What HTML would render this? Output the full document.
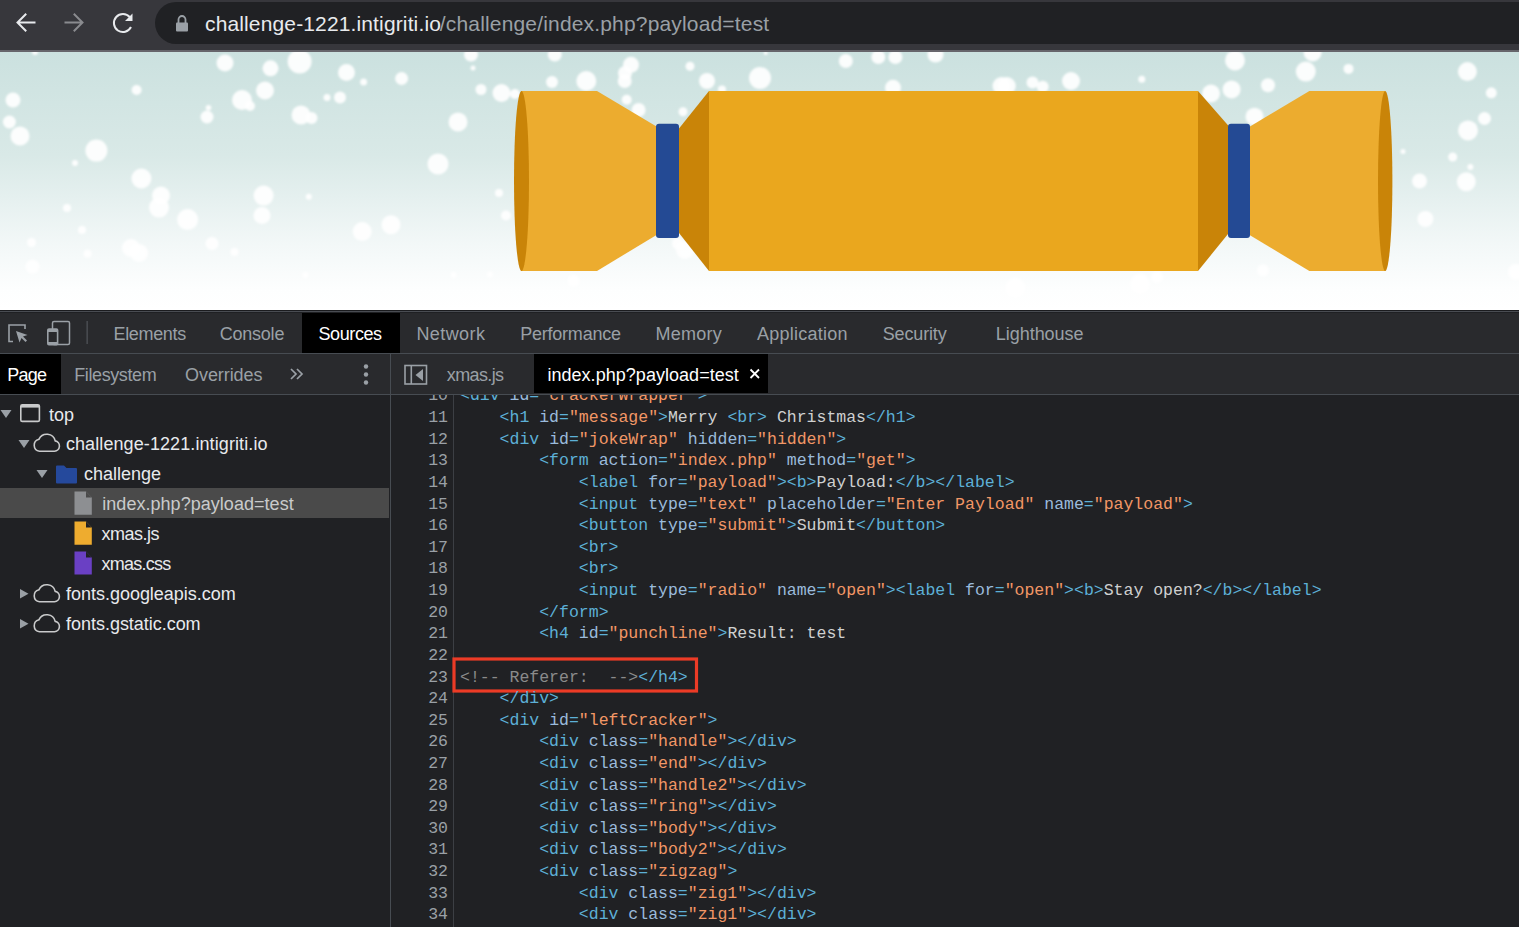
<!DOCTYPE html>
<html><head><meta charset="utf-8">
<style>
html,body{margin:0;padding:0;}
body{width:1519px;height:927px;overflow:hidden;position:relative;background:#202124;font-family:"Liberation Sans",sans-serif;}
.a{position:absolute;}
.t{position:absolute;white-space:pre;line-height:normal;}
.c{position:absolute;left:460px;white-space:pre;font-family:"Liberation Mono",monospace;font-size:16.500px;line-height:normal;}
.ln{position:absolute;left:400px;width:48px;text-align:right;white-space:pre;font-family:"Liberation Mono",monospace;font-size:16.500px;line-height:normal;color:#9aa0a6;}
</style></head><body>
<!-- browser toolbar -->
<div class="a" style="left:0;top:0;width:1519px;height:50px;background:#37373c"></div>
<div class="a" style="left:0;top:50px;width:1519px;height:2px;background:#66656b"></div>
<div class="a" style="left:155px;top:2px;width:1500px;height:42px;border-radius:21px;background:#202124"></div>
<svg class="a" style="left:0;top:0" width="200" height="50" viewBox="0 0 200 50">
 <g fill="none" stroke-width="2" stroke-linecap="square">
  <path d="M34.5 22.5H18.5M25.5 14.5L17.5 22.5L25.5 30.5" stroke="#e8eaed"/>
  <path d="M65.5 22.5H81.5M74.5 14.5L82.5 22.5L74.5 30.5" stroke="#8a8b8f"/>
  <path d="M129.8 17.2A9 9 0 1 0 131 27" stroke="#e8eaed" stroke-linecap="butt"/>
 </g>
 <path d="M132.5 13.5V21H125Z" fill="#e8eaed"/>
 <!-- lock -->
 <rect x="176" y="22.5" width="12" height="9" rx="1" fill="#9aa0a6"/>
 <path d="M178.5 23V19.5A3.5 3.5 0 0 1 185.5 19.5V23" fill="none" stroke="#9aa0a6" stroke-width="1.8"/>
</svg>
<!-- page -->
<div class="a" style="left:0;top:52px;width:1519px;height:258px;background:linear-gradient(#cbe1df 0%,#d9e9e7 40%,#f3f8f8 75%,#fdfefe 92%,#ffffff 100%);overflow:hidden">
<svg width="1519" height="258" viewBox="0 52 1519 258" style="display:block">
 <defs><filter id="bl" x="-50%" y="-50%" width="200%" height="200%"><feGaussianBlur stdDeviation="0.8"/></filter></defs>
 <g fill="#ffffff" fill-opacity="0.92" filter="url(#bl)"><circle cx='225' cy='63' r='8.5'/><circle cx='270.5' cy='68.3' r='8'/><circle cx='299.6' cy='61.4' r='12'/><circle cx='346.5' cy='72.4' r='8.5'/><circle cx='363.6' cy='82' r='3.5'/><circle cx='401.6' cy='78.5' r='6.5'/><circle cx='471' cy='54.6' r='7'/><circle cx='473' cy='68' r='2.5'/><circle cx='481' cy='89.5' r='5.5'/><circle cx='501.5' cy='93' r='9'/><circle cx='515' cy='94' r='5'/><circle cx='136.6' cy='90' r='5'/><circle cx='13' cy='100' r='7.5'/><circle cx='9.4' cy='122' r='6.5'/><circle cx='20' cy='136' r='9.5'/><circle cx='96.4' cy='150.6' r='11'/><circle cx='75' cy='163' r='3'/><circle cx='141.4' cy='178.5' r='10'/><circle cx='161' cy='195.6' r='9'/><circle cx='159' cy='207.6' r='10'/><circle cx='187.6' cy='219.6' r='10.5'/><circle cx='67' cy='208' r='4'/><circle cx='82' cy='230' r='4'/><circle cx='31.5' cy='242.5' r='4.5'/><circle cx='87.6' cy='253.8' r='4'/><circle cx='32.5' cy='266.8' r='7'/><circle cx='131' cy='248' r='9'/><circle cx='139' cy='253' r='9'/><circle cx='212' cy='243.5' r='6.5'/><circle cx='234.5' cy='252' r='4'/><circle cx='242' cy='100' r='10'/><circle cx='250' cy='106' r='5'/><circle cx='265' cy='90.5' r='9'/><circle cx='208.5' cy='107.7' r='2.8'/><circle cx='207' cy='117' r='6.5'/><circle cx='301' cy='115' r='9.5'/><circle cx='311.5' cy='118' r='6'/><circle cx='327' cy='97.4' r='3.5'/><circle cx='340' cy='97.4' r='6'/><circle cx='458' cy='122' r='9.5'/><circle cx='438' cy='164' r='10.5'/><circle cx='263.6' cy='195.6' r='10'/><circle cx='262' cy='215.5' r='8.5'/><circle cx='308.8' cy='196.7' r='3'/><circle cx='362.2' cy='231.6' r='9.5'/><circle cx='391' cy='224.7' r='9.5'/><circle cx='499' cy='193' r='4'/><circle cx='506' cy='215.5' r='5'/><circle cx='35' cy='52' r='3'/><circle cx='554.8' cy='54.6' r='7'/><circle cx='631' cy='64.8' r='8'/><circle cx='625' cy='73' r='7'/><circle cx='624.7' cy='81' r='7'/><circle cx='690' cy='66.2' r='4.5'/><circle cx='586.3' cy='81' r='10'/><circle cx='552' cy='82' r='6'/><circle cx='707' cy='81' r='8'/><circle cx='760' cy='78' r='11'/><circle cx='845.8' cy='61' r='7'/><circle cx='878.3' cy='57' r='7'/><circle cx='895.4' cy='57' r='7'/><circle cx='935.5' cy='54.6' r='8'/><circle cx='765.7' cy='53' r='2'/><circle cx='893' cy='87.8' r='8'/><circle cx='1001.5' cy='86' r='9'/><circle cx='722' cy='89.5' r='4'/><circle cx='626.7' cy='99.8' r='5'/><circle cx='638.6' cy='110' r='7'/><circle cx='683' cy='111.8' r='4.5'/><circle cx='685' cy='250' r='9'/><circle cx='678' cy='243.5' r='6'/><circle cx='1235' cy='60.4' r='10'/><circle cx='1312.6' cy='52.5' r='9'/><circle cx='1305.8' cy='71.6' r='10'/><circle cx='1348.5' cy='68.9' r='5'/><circle cx='1467.4' cy='71.6' r='9.5'/><circle cx='1071' cy='81' r='9'/><circle cx='1032.5' cy='82.6' r='6'/><circle cx='1042.7' cy='86.7' r='6'/><circle cx='1006.8' cy='86' r='9'/><circle cx='1141.8' cy='79.2' r='3.5'/><circle cx='1231.6' cy='89.4' r='9'/><circle cx='1211' cy='93.5' r='9'/><circle cx='1268' cy='85.3' r='7'/><circle cx='1254.5' cy='116.7' r='9'/><circle cx='1491.3' cy='92.8' r='5.5'/><circle cx='1484.5' cy='118.5' r='6.5'/><circle cx='1468' cy='130.4' r='10'/><circle cx='1403' cy='151.6' r='2.5'/><circle cx='1452.7' cy='157' r='4.5'/><circle cx='1470.4' cy='167' r='3'/><circle cx='1419.5' cy='181' r='7.5'/><circle cx='1466.3' cy='181.7' r='9.5'/><circle cx='1425.4' cy='219' r='8'/><circle cx='1015.4' cy='288' r='10'/><circle cx='1140' cy='284' r='10'/><circle cx='1157' cy='277.3' r='6'/><circle cx='1263' cy='270.5' r='6'/><circle cx='1516' cy='272' r='8'/><circle cx='573.6' cy='281' r='6'/><circle cx='305.4' cy='275' r='3'/><circle cx='453.6' cy='275' r='3'/><circle cx='490' cy='274.4' r='3'/></g>
 <polygon points="521,91 597,91 656.5,126.4 656.5,234.9 597,271 521,271" fill="#ecac2f"/>
 <ellipse cx="521.5" cy="181" rx="7.5" ry="90" fill="#c98408"/>
 <polygon points="679,128.5 709,91 709,271 679,233" fill="#c98408"/>
 <rect x="709" y="91" width="489" height="180" fill="#eaa71e"/>
 <polygon points="1198,91 1228,125.3 1228,234 1198,271" fill="#c98408"/>
 <polygon points="1250,126.4 1309.4,91 1385,91 1385,271 1309.4,271 1250,235.3" fill="#ecac2f"/>
 <ellipse cx="1385.2" cy="181" rx="7.2" ry="90" fill="#c98408"/>
 <rect x="656" y="123.8" width="23" height="114.2" rx="3" fill="#244a94"/>
 <rect x="1228" y="123.8" width="22" height="114.2" rx="3" fill="#244a94"/>
</svg>
</div>
<!-- devtools chrome -->
<div class="a" style="left:0;top:310px;width:1519px;height:1px;background:#1b1c1f"></div>
<div class="a" style="left:0;top:311px;width:1519px;height:1px;background:#494c52"></div>
<div class="a" style="left:0;top:312px;width:1519px;height:1px;background:#1f2023"></div>
<div class="a" style="left:0;top:313px;width:1519px;height:40px;background:#292a2d"></div>
<div class="a" style="left:0;top:353px;width:1519px;height:1px;background:#474c52"></div>
<div class="a" style="left:0;top:354px;width:1519px;height:40px;background:#292a2d"></div>
<div class="a" style="left:0;top:394px;width:1519px;height:1px;background:#474c52"></div>
<div class="a" style="left:302px;top:313px;width:98px;height:40px;background:#000"></div>
<div class="a" style="left:0;top:354px;width:61px;height:40px;background:#000"></div>
<div class="a" style="left:534px;top:354px;width:234px;height:39px;background:#000"></div>
<div class="a" style="left:390px;top:353px;width:1px;height:574px;background:#474c52"></div>
<div class="a" style="left:0;top:488px;width:389px;height:30px;background:#4a4a4a"></div>
<div class="a" style="left:453px;top:395px;width:1px;height:532px;background:#3c3f44"></div>
<!-- devtools icons -->
<svg class="a" style="left:0;top:310px" width="1519" height="617" viewBox="0 310 1519 617">
 <!-- inspect -->
 <path d="M13 341.5H9V325H25V329" fill="none" stroke="#9aa0a6" stroke-width="1.6"/>
 <path d="M16 331L27.5 335L23 336.5L27 340.5L25.5 342L21.5 338L19.5 342.5Z" fill="#9aa0a6"/>
 <!-- device -->
 <rect x="52.5" y="321.5" width="17" height="23" rx="1.5" fill="none" stroke="#9aa0a6" stroke-width="1.5"/>
 <rect x="47.8" y="329" width="9.8" height="15.6" rx="1.2" fill="#292a2d" stroke="#9aa0a6" stroke-width="1.6"/>
 <rect x="47.8" y="329" width="9.8" height="3" fill="#9aa0a6"/>
 <rect x="47.8" y="342" width="9.8" height="2.6" fill="#9aa0a6"/>
 <rect x="86.5" y="321" width="1.3" height="23" fill="#4f5258"/>
 <!-- chevrons -->
 <path d="M291 369L296 374L291 379M297 369L302 374L297 379" fill="none" stroke="#9aa0a6" stroke-width="1.7"/>
 <circle cx="366" cy="366.5" r="2.2" fill="#9aa0a6"/><circle cx="366" cy="374.5" r="2.2" fill="#9aa0a6"/><circle cx="366" cy="382.5" r="2.2" fill="#9aa0a6"/>
 <!-- sidebar toggle -->
 <rect x="405" y="365.5" width="21.5" height="18.5" fill="none" stroke="#9aa0a6" stroke-width="1.6"/>
 <rect x="410.5" y="365.5" width="1.6" height="18.5" fill="#9aa0a6"/>
 <path d="M423 369V381L415.5 375Z" fill="#9aa0a6"/>
 <!-- close x -->
 <path d="M750.5 369.5L759 378M759 369.5L750.5 378" stroke="#ffffff" stroke-width="1.8"/>
 <!-- tree triangles -->
 <path d="M0.5 410H11.5L6 418Z" fill="#9aa0a6"/>
 <path d="M18.5 440H29.5L24 448Z" fill="#9aa0a6"/>
 <path d="M36.5 470H47.5L42 478Z" fill="#9aa0a6"/>
 <path d="M20 589V598.5L28.5 593.75Z" fill="#9aa0a6"/>
 <path d="M20 619V628.5L28.5 623.75Z" fill="#9aa0a6"/>
 <!-- window icon -->
 <rect x="20.8" y="404.8" width="18.6" height="16.6" rx="1.5" fill="none" stroke="#c9cacb" stroke-width="1.6"/>
 <rect x="21" y="405" width="18.5" height="2.6" fill="#c9cacb"/>
 <!-- clouds -->
 <g fill="none" stroke="#c9cacb" stroke-width="1.6">
  <path d="M39.5 451.2H54.5A5.2 5.2 0 0 0 55.2 440.9A8.6 8.6 0 0 0 39 439.2A6.1 6.1 0 0 0 39.5 451.2Z"/>
  <path d="M39.5 601.7H54.5A5.2 5.2 0 0 0 55.2 591.4A8.6 8.6 0 0 0 39 589.7A6.1 6.1 0 0 0 39.5 601.7Z"/>
  <path d="M39.5 631.7H54.5A5.2 5.2 0 0 0 55.2 621.4A8.6 8.6 0 0 0 39 619.7A6.1 6.1 0 0 0 39.5 631.7Z"/>
 </g>
 <!-- folder -->
 <path d="M56 466.5Q56 465.5 57 465.5H64L66.5 468H76Q77 468 77 469V482.5Q77 483.5 76 483.5H57Q56 483.5 56 482.5Z" fill="#25499c"/>
 <!-- file icons -->
 <path d="M74.5 491.5H86L91.8 497.5V514.8H74.5Z" fill="#8d8f92"/>
 <path d="M86 491.5V497.5H91.8Z" fill="#4a4a4a"/>
 <path d="M74.5 521.5H86L91.8 527.5V544.8H74.5Z" fill="#eeac2f"/>
 <path d="M86 521.5V527.5H91.8Z" fill="#202124"/>
 <path d="M74.5 551.5H86L91.8 557.5V574.6H74.5Z" fill="#6a40c4"/>
 <path d="M86 551.5V557.5H91.8Z" fill="#202124"/>
 <!-- red box -->
 <rect x="454" y="659" width="242.5" height="32" fill="none" stroke="#ec3b26" stroke-width="3.2"/>
</svg>
<div class='t' style="left:205.00px;top:12.00px;font-size:21px;color:#e8eaed;letter-spacing:0.137px;font-family:'Liberation Sans'">challenge-1221.intigriti.io</div>
<div class='t' style="left:439.80px;top:12.00px;font-size:21px;color:#9aa0a6;letter-spacing:0.167px;font-family:'Liberation Sans'">/challenge/index.php?payload=test</div>
<div class='t' style="left:113.50px;top:323.71px;font-size:18px;color:#9aa0a6;letter-spacing:-0.342px;font-family:'Liberation Sans'">Elements</div>
<div class='t' style="left:219.70px;top:323.71px;font-size:18px;color:#9aa0a6;letter-spacing:-0.220px;font-family:'Liberation Sans'">Console</div>
<div class='t' style="left:318.50px;top:323.71px;font-size:18px;color:#ffffff;letter-spacing:-0.405px;font-family:'Liberation Sans'">Sources</div>
<div class='t' style="left:416.40px;top:323.71px;font-size:18px;color:#9aa0a6;letter-spacing:0.412px;font-family:'Liberation Sans'">Network</div>
<div class='t' style="left:520.30px;top:323.71px;font-size:18px;color:#9aa0a6;letter-spacing:-0.240px;font-family:'Liberation Sans'">Performance</div>
<div class='t' style="left:655.40px;top:323.71px;font-size:18px;color:#9aa0a6;letter-spacing:0.282px;font-family:'Liberation Sans'">Memory</div>
<div class='t' style="left:756.90px;top:323.71px;font-size:18px;color:#9aa0a6;letter-spacing:0.249px;font-family:'Liberation Sans'">Application</div>
<div class='t' style="left:882.70px;top:323.71px;font-size:18px;color:#9aa0a6;letter-spacing:-0.140px;font-family:'Liberation Sans'">Security</div>
<div class='t' style="left:995.70px;top:323.71px;font-size:18px;color:#9aa0a6;letter-spacing:-0.018px;font-family:'Liberation Sans'">Lighthouse</div>
<div class='t' style="left:7.20px;top:365.21px;font-size:18px;color:#ffffff;letter-spacing:-0.760px;font-family:'Liberation Sans'">Page</div>
<div class='t' style="left:74.20px;top:365.21px;font-size:18px;color:#9aa0a6;letter-spacing:-0.391px;font-family:'Liberation Sans'">Filesystem</div>
<div class='t' style="left:185.10px;top:365.21px;font-size:18px;color:#9aa0a6;letter-spacing:-0.080px;font-family:'Liberation Sans'">Overrides</div>
<div class='t' style="left:446.80px;top:365.21px;font-size:18px;color:#9aa0a6;letter-spacing:-0.615px;font-family:'Liberation Sans'">xmas.js</div>
<div class='t' style="left:547.40px;top:365.21px;font-size:18px;color:#ffffff;letter-spacing:0.038px;font-family:'Liberation Sans'">index.php?payload=test</div>
<div class='t' style="left:49.00px;top:404.71px;font-size:18px;color:#e8eaed;letter-spacing:0.000px;font-family:'Liberation Sans'">top</div>
<div class='t' style="left:65.90px;top:434.31px;font-size:18px;color:#e8eaed;letter-spacing:0.095px;font-family:'Liberation Sans'">challenge-1221.intigriti.io</div>
<div class='t' style="left:83.90px;top:464.11px;font-size:18px;color:#e8eaed;letter-spacing:0.000px;font-family:'Liberation Sans'">challenge</div>
<div class='t' style="left:102.30px;top:494.31px;font-size:18px;color:#c9cacb;letter-spacing:0.034px;font-family:'Liberation Sans'">index.php?payload=test</div>
<div class='t' style="left:101.50px;top:524.31px;font-size:18px;color:#e8eaed;letter-spacing:-0.501px;font-family:'Liberation Sans'">xmas.js</div>
<div class='t' style="left:101.50px;top:554.31px;font-size:18px;color:#e8eaed;letter-spacing:-0.763px;font-family:'Liberation Sans'">xmas.css</div>
<div class='t' style="left:66.10px;top:584.31px;font-size:18px;color:#e8eaed;letter-spacing:-0.030px;font-family:'Liberation Sans'">fonts.googleapis.com</div>
<div class='t' style="left:66.10px;top:614.31px;font-size:18px;color:#e8eaed;letter-spacing:-0.033px;font-family:'Liberation Sans'">fonts.gstatic.com</div>
<div class="a" style="left:391px;top:395px;width:1128px;height:532px;overflow:hidden">
<div class="a" style="left:-391px;top:-395px;width:1519px;height:927px">
<div class='c' style='top:386.44px'><span style='color:#5db0d7'>&lt;div </span><span style='color:#9bbbdc'>id</span><span style='color:#5db0d7'>=</span><span style='color:#f29766'>&quot;crackerWrapper&quot;</span><span style='color:#5db0d7'>&gt;</span></div>
<div class='ln' style='top:386.44px'>10</div>
<div class='c' style='top:408.06px'><span style='color:#cfd0d0'>    </span><span style='color:#5db0d7'>&lt;h1 </span><span style='color:#9bbbdc'>id</span><span style='color:#5db0d7'>=</span><span style='color:#f29766'>&quot;message&quot;</span><span style='color:#5db0d7'>&gt;</span><span style='color:#cfd0d0'>Merry </span><span style='color:#5db0d7'>&lt;br&gt;</span><span style='color:#cfd0d0'> Christmas</span><span style='color:#5db0d7'>&lt;/h1&gt;</span></div>
<div class='ln' style='top:408.06px'>11</div>
<div class='c' style='top:429.68px'><span style='color:#cfd0d0'>    </span><span style='color:#5db0d7'>&lt;div </span><span style='color:#9bbbdc'>id</span><span style='color:#5db0d7'>=</span><span style='color:#f29766'>&quot;jokeWrap&quot;</span><span style='color:#cfd0d0'> </span><span style='color:#9bbbdc'>hidden</span><span style='color:#5db0d7'>=</span><span style='color:#f29766'>&quot;hidden&quot;</span><span style='color:#5db0d7'>&gt;</span></div>
<div class='ln' style='top:429.68px'>12</div>
<div class='c' style='top:451.30px'><span style='color:#cfd0d0'>        </span><span style='color:#5db0d7'>&lt;form </span><span style='color:#9bbbdc'>action</span><span style='color:#5db0d7'>=</span><span style='color:#f29766'>&quot;index.php&quot;</span><span style='color:#cfd0d0'> </span><span style='color:#9bbbdc'>method</span><span style='color:#5db0d7'>=</span><span style='color:#f29766'>&quot;get&quot;</span><span style='color:#5db0d7'>&gt;</span></div>
<div class='ln' style='top:451.30px'>13</div>
<div class='c' style='top:472.92px'><span style='color:#cfd0d0'>            </span><span style='color:#5db0d7'>&lt;label </span><span style='color:#9bbbdc'>for</span><span style='color:#5db0d7'>=</span><span style='color:#f29766'>&quot;payload&quot;</span><span style='color:#5db0d7'>&gt;&lt;b&gt;</span><span style='color:#cfd0d0'>Payload:</span><span style='color:#5db0d7'>&lt;/b&gt;&lt;/label&gt;</span></div>
<div class='ln' style='top:472.92px'>14</div>
<div class='c' style='top:494.54px'><span style='color:#cfd0d0'>            </span><span style='color:#5db0d7'>&lt;input </span><span style='color:#9bbbdc'>type</span><span style='color:#5db0d7'>=</span><span style='color:#f29766'>&quot;text&quot;</span><span style='color:#cfd0d0'> </span><span style='color:#9bbbdc'>placeholder</span><span style='color:#5db0d7'>=</span><span style='color:#f29766'>&quot;Enter Payload&quot;</span><span style='color:#cfd0d0'> </span><span style='color:#9bbbdc'>name</span><span style='color:#5db0d7'>=</span><span style='color:#f29766'>&quot;payload&quot;</span><span style='color:#5db0d7'>&gt;</span></div>
<div class='ln' style='top:494.54px'>15</div>
<div class='c' style='top:516.16px'><span style='color:#cfd0d0'>            </span><span style='color:#5db0d7'>&lt;button </span><span style='color:#9bbbdc'>type</span><span style='color:#5db0d7'>=</span><span style='color:#f29766'>&quot;submit&quot;</span><span style='color:#5db0d7'>&gt;</span><span style='color:#cfd0d0'>Submit</span><span style='color:#5db0d7'>&lt;/button&gt;</span></div>
<div class='ln' style='top:516.16px'>16</div>
<div class='c' style='top:537.78px'><span style='color:#cfd0d0'>            </span><span style='color:#5db0d7'>&lt;br&gt;</span></div>
<div class='ln' style='top:537.78px'>17</div>
<div class='c' style='top:559.40px'><span style='color:#cfd0d0'>            </span><span style='color:#5db0d7'>&lt;br&gt;</span></div>
<div class='ln' style='top:559.40px'>18</div>
<div class='c' style='top:581.02px'><span style='color:#cfd0d0'>            </span><span style='color:#5db0d7'>&lt;input </span><span style='color:#9bbbdc'>type</span><span style='color:#5db0d7'>=</span><span style='color:#f29766'>&quot;radio&quot;</span><span style='color:#cfd0d0'> </span><span style='color:#9bbbdc'>name</span><span style='color:#5db0d7'>=</span><span style='color:#f29766'>&quot;open&quot;</span><span style='color:#5db0d7'>&gt;&lt;label </span><span style='color:#9bbbdc'>for</span><span style='color:#5db0d7'>=</span><span style='color:#f29766'>&quot;open&quot;</span><span style='color:#5db0d7'>&gt;&lt;b&gt;</span><span style='color:#cfd0d0'>Stay open?</span><span style='color:#5db0d7'>&lt;/b&gt;&lt;/label&gt;</span></div>
<div class='ln' style='top:581.02px'>19</div>
<div class='c' style='top:602.64px'><span style='color:#cfd0d0'>        </span><span style='color:#5db0d7'>&lt;/form&gt;</span></div>
<div class='ln' style='top:602.64px'>20</div>
<div class='c' style='top:624.26px'><span style='color:#cfd0d0'>        </span><span style='color:#5db0d7'>&lt;h4 </span><span style='color:#9bbbdc'>id</span><span style='color:#5db0d7'>=</span><span style='color:#f29766'>&quot;punchline&quot;</span><span style='color:#5db0d7'>&gt;</span><span style='color:#cfd0d0'>Result: test</span></div>
<div class='ln' style='top:624.26px'>21</div>
<div class='c' style='top:645.88px'></div>
<div class='ln' style='top:645.88px'>22</div>
<div class='c' style='top:667.50px'><span style='color:#8b8b8b'>&lt;!-- Referer:  --&gt;</span><span style='color:#5db0d7'>&lt;/h4&gt;</span></div>
<div class='ln' style='top:667.50px'>23</div>
<div class='c' style='top:689.12px'><span style='color:#cfd0d0'>    </span><span style='color:#5db0d7'>&lt;/div&gt;</span></div>
<div class='ln' style='top:689.12px'>24</div>
<div class='c' style='top:710.74px'><span style='color:#cfd0d0'>    </span><span style='color:#5db0d7'>&lt;div </span><span style='color:#9bbbdc'>id</span><span style='color:#5db0d7'>=</span><span style='color:#f29766'>&quot;leftCracker&quot;</span><span style='color:#5db0d7'>&gt;</span></div>
<div class='ln' style='top:710.74px'>25</div>
<div class='c' style='top:732.36px'><span style='color:#cfd0d0'>        </span><span style='color:#5db0d7'>&lt;div </span><span style='color:#9bbbdc'>class</span><span style='color:#5db0d7'>=</span><span style='color:#f29766'>&quot;handle&quot;</span><span style='color:#5db0d7'>&gt;&lt;/div&gt;</span></div>
<div class='ln' style='top:732.36px'>26</div>
<div class='c' style='top:753.98px'><span style='color:#cfd0d0'>        </span><span style='color:#5db0d7'>&lt;div </span><span style='color:#9bbbdc'>class</span><span style='color:#5db0d7'>=</span><span style='color:#f29766'>&quot;end&quot;</span><span style='color:#5db0d7'>&gt;&lt;/div&gt;</span></div>
<div class='ln' style='top:753.98px'>27</div>
<div class='c' style='top:775.60px'><span style='color:#cfd0d0'>        </span><span style='color:#5db0d7'>&lt;div </span><span style='color:#9bbbdc'>class</span><span style='color:#5db0d7'>=</span><span style='color:#f29766'>&quot;handle2&quot;</span><span style='color:#5db0d7'>&gt;&lt;/div&gt;</span></div>
<div class='ln' style='top:775.60px'>28</div>
<div class='c' style='top:797.22px'><span style='color:#cfd0d0'>        </span><span style='color:#5db0d7'>&lt;div </span><span style='color:#9bbbdc'>class</span><span style='color:#5db0d7'>=</span><span style='color:#f29766'>&quot;ring&quot;</span><span style='color:#5db0d7'>&gt;&lt;/div&gt;</span></div>
<div class='ln' style='top:797.22px'>29</div>
<div class='c' style='top:818.84px'><span style='color:#cfd0d0'>        </span><span style='color:#5db0d7'>&lt;div </span><span style='color:#9bbbdc'>class</span><span style='color:#5db0d7'>=</span><span style='color:#f29766'>&quot;body&quot;</span><span style='color:#5db0d7'>&gt;&lt;/div&gt;</span></div>
<div class='ln' style='top:818.84px'>30</div>
<div class='c' style='top:840.46px'><span style='color:#cfd0d0'>        </span><span style='color:#5db0d7'>&lt;div </span><span style='color:#9bbbdc'>class</span><span style='color:#5db0d7'>=</span><span style='color:#f29766'>&quot;body2&quot;</span><span style='color:#5db0d7'>&gt;&lt;/div&gt;</span></div>
<div class='ln' style='top:840.46px'>31</div>
<div class='c' style='top:862.08px'><span style='color:#cfd0d0'>        </span><span style='color:#5db0d7'>&lt;div </span><span style='color:#9bbbdc'>class</span><span style='color:#5db0d7'>=</span><span style='color:#f29766'>&quot;zigzag&quot;</span><span style='color:#5db0d7'>&gt;</span></div>
<div class='ln' style='top:862.08px'>32</div>
<div class='c' style='top:883.70px'><span style='color:#cfd0d0'>            </span><span style='color:#5db0d7'>&lt;div </span><span style='color:#9bbbdc'>class</span><span style='color:#5db0d7'>=</span><span style='color:#f29766'>&quot;zig1&quot;</span><span style='color:#5db0d7'>&gt;&lt;/div&gt;</span></div>
<div class='ln' style='top:883.70px'>33</div>
<div class='c' style='top:905.32px'><span style='color:#cfd0d0'>            </span><span style='color:#5db0d7'>&lt;div </span><span style='color:#9bbbdc'>class</span><span style='color:#5db0d7'>=</span><span style='color:#f29766'>&quot;zig1&quot;</span><span style='color:#5db0d7'>&gt;&lt;/div&gt;</span></div>
<div class='ln' style='top:905.32px'>34</div>
</div></div>
</body></html>
